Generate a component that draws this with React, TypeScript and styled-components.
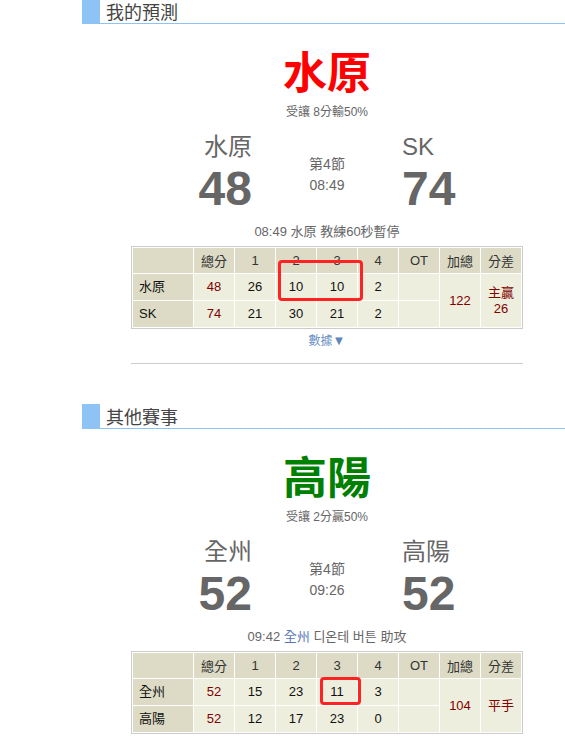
import React from "react";
import styled, { createGlobalStyle } from "styled-components";

const GlobalStyle = createGlobalStyle`
  html, body {
    margin: 0;
    padding: 0;
    background: #fff;
    overflow: hidden;
  }
  body {
    font-family: "Liberation Sans", "Noto Sans CJK TC", "Noto Sans CJK KR", sans-serif;
  }
`;

const HEAD_BG = "#dddbc5";
const BODY_BG = "#eeeede";
const MAROON = "#800000";
const BLUE = "#8dc3f5";

const Page = styled.div`
  margin-left: 82px;
  width: 490px;
`;

const Section = styled.section<{ $first?: boolean }>`
  margin-top: ${(p) => (p.$first ? "-1px" : "40px")};
`;

const SectionHeader = styled.h2`
  margin: 0;
  display: flex;
  align-items: center;
  gap: 6px;
  height: 24px;
  border-bottom: 1px solid ${BLUE};
  font-size: 18px;
  font-weight: normal;
  color: #444;
  &::before {
    content: "";
    width: 18px;
    align-self: stretch;
    background: ${BLUE};
  }
`;

const Pick = styled.div<{ $color: string }>`
  margin-top: 20px;
  text-align: center;
  font-size: 44px;
  line-height: 60px;
  font-weight: bold;
  color: ${(p) => p.$color};
`;

const Odds = styled.div`
  text-align: center;
  font-size: 12px;
  line-height: 16px;
  color: #666;
`;

const Scoreboard = styled.div`
  margin-top: 13px;
  display: flex;
  justify-content: center;
  align-items: center;
  color: #666;
`;

const TeamSide = styled.div<{ $align: "left" | "right" }>`
  width: 120px;
  text-align: ${(p) => p.$align};
`;

const TeamName = styled.div`
  font-size: 24px;
  line-height: 28px;
`;

const Score = styled.div`
  font-size: 48px;
  line-height: 56px;
  font-weight: bold;
`;

const Clock = styled.div`
  width: 150px;
  text-align: center;
  font-size: 14px;
  line-height: 21px;
`;

const Event = styled.div`
  margin-top: 6px;
  text-align: center;
  font-size: 13px;
  line-height: 18px;
  color: #666;
`;

const TeamRef = styled.span`
  color: #5577bb;
`;

const TableWrap = styled.div`
  position: relative;
  width: 392px;
  margin: 5px auto 0;
`;

const Table = styled.table`
  width: 392px;
  table-layout: fixed;
  border-collapse: separate;
  border-spacing: 1px;
  border: 1px solid #ccc;
  font-size: 13px;
`;

const Th = styled.th`
  height: 25px;
  padding: 0;
  background: ${HEAD_BG};
  font-weight: normal;
  color: #333;
  text-align: center;
`;

const Td = styled.td<{ $team?: boolean; $red?: boolean }>`
  height: 26px;
  padding: ${(p) => (p.$team ? "0 0 0 6px" : "0")};
  background: ${(p) => (p.$team ? HEAD_BG : BODY_BG)};
  text-align: ${(p) => (p.$team ? "left" : "center")};
  color: ${(p) => (p.$red ? MAROON : "#111")};
  line-height: 16px;
`;

const Highlight = styled.div<{ $x: number; $y: number; $w: number; $h: number }>`
  position: absolute;
  left: ${(p) => p.$x}px;
  top: ${(p) => p.$y}px;
  width: ${(p) => p.$w}px;
  height: ${(p) => p.$h}px;
  box-sizing: border-box;
  border: 3px solid #f22;
  border-radius: 4px;
  pointer-events: none;
`;

const More = styled.div`
  margin-top: 4px;
  text-align: center;
  font-size: 12px;
  line-height: 16px;
  color: #6b8fc4;
  cursor: pointer;
`;

const Arrow = styled.span`
  font-size: 13px;
  color: #5f86bd;
`;

const Divider = styled.hr`
  width: 392px;
  margin: 14px auto 0;
  border: 0;
  border-top: 1px solid #ccc;
`;

type Row = { team: string; total: number; q: (number | string)[] };
type Game = {
  title: string;
  pick: string;
  pickColor: string;
  odds: string;
  home: string;
  away: string;
  homeScore: number;
  awayScore: number;
  period: string;
  clock: string;
  event: React.ReactNode;
  rows: Row[];
  sum: number;
  diff: React.ReactNode;
  box: { x: number; y: number; w: number; h: number };
  more?: boolean;
};

const games: Game[] = [
  {
    title: "我的預測",
    pick: "水原",
    pickColor: "#ff0000",
    odds: "受讓 8分輸50%",
    home: "水原",
    away: "SK",
    homeScore: 48,
    awayScore: 74,
    period: "第4節",
    clock: "08:49",
    event: <>08:49 水原 教練60秒暫停</>,
    rows: [
      { team: "水原", total: 48, q: [26, 10, 10, 2] },
      { team: "SK", total: 74, q: [21, 30, 21, 2] },
    ],
    sum: 122,
    diff: (
      <>
        主贏
        <br />
        26
      </>
    ),
    box: { x: 147, y: 14, w: 85, h: 41 },
    more: true,
  },
  {
    title: "其他賽事",
    pick: "高陽",
    pickColor: "#008000",
    odds: "受讓 2分贏50%",
    home: "全州",
    away: "高陽",
    homeScore: 52,
    awayScore: 52,
    period: "第4節",
    clock: "09:26",
    event: (
      <>
        09:42 <TeamRef>全州</TeamRef> 디온테 버튼 助攻
      </>
    ),
    rows: [
      { team: "全州", total: 52, q: [15, 23, 11, 3] },
      { team: "高陽", total: 52, q: [12, 17, 23, 0] },
    ],
    sum: 104,
    diff: "平手",
    box: { x: 189, y: 26, w: 41, h: 28 },
  },
];

const headers = ["", "總分", "1", "2", "3", "4", "OT", "加總", "分差"];

function GameBlock({ g, first }: { g: Game; first?: boolean }) {
  return (
    <Section $first={first}>
      <SectionHeader>{g.title}</SectionHeader>
      <Pick $color={g.pickColor}>{g.pick}</Pick>
      <Odds>{g.odds}</Odds>
      <Scoreboard>
        <TeamSide $align="right">
          <TeamName>{g.home}</TeamName>
          <Score>{g.homeScore}</Score>
        </TeamSide>
        <Clock>
          <div>{g.period}</div>
          <div>{g.clock}</div>
        </Clock>
        <TeamSide $align="left">
          <TeamName>{g.away}</TeamName>
          <Score>{g.awayScore}</Score>
        </TeamSide>
      </Scoreboard>
      <Event>{g.event}</Event>
      <TableWrap>
        <Table>
          <colgroup>
            <col style={{ width: 60 }} />
            {headers.slice(1).map((h) => (
              <col key={h} style={{ width: 40 }} />
            ))}
          </colgroup>
          <thead>
            <tr>
              {headers.map((h, i) => (
                <Th key={i}>{h}</Th>
              ))}
            </tr>
          </thead>
          <tbody>
            {g.rows.map((r, ri) => (
              <tr key={r.team}>
                <Td $team>{r.team}</Td>
                <Td $red>{r.total}</Td>
                {r.q.map((v, i) => (
                  <Td key={i}>{v}</Td>
                ))}
                <Td />
                {ri === 0 && (
                  <>
                    <Td rowSpan={2} $red>
                      {g.sum}
                    </Td>
                    <Td rowSpan={2} $red>
                      {g.diff}
                    </Td>
                  </>
                )}
              </tr>
            ))}
          </tbody>
        </Table>
        <Highlight $x={g.box.x} $y={g.box.y} $w={g.box.w} $h={g.box.h} />
      </TableWrap>
      {g.more && (
        <>
          <More>
            數據<Arrow>▼</Arrow>
          </More>
          <Divider />
        </>
      )}
    </Section>
  );
}

export default function App() {
  return (
    <>
      <GlobalStyle />
      <Page>
        {games.map((g, i) => (
          <GameBlock key={g.title} g={g} first={i === 0} />
        ))}
      </Page>
    </>
  );
}
